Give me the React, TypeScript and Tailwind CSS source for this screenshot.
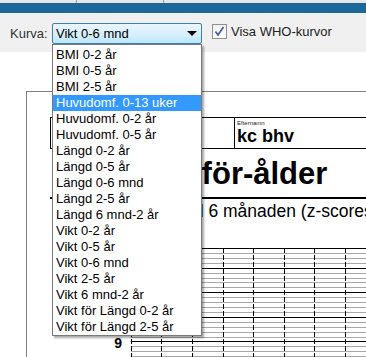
import React from 'react';

const curves = [
  'BMI 0-2 år',
  'BMI 0-5 år',
  'BMI 2-5 år',
  'Huvudomf. 0-13 uker',
  'Huvudomf. 0-2 år',
  'Huvudomf. 0-5 år',
  'Längd 0-2 år',
  'Längd 0-5 år',
  'Längd 0-6 mnd',
  'Längd 2-5 år',
  'Längd 6 mnd-2 år',
  'Vikt 0-2 år',
  'Vikt 0-5 år',
  'Vikt 0-6 mnd',
  'Vikt 2-5 år',
  'Vikt 6 mnd-2 år',
  'Vikt för Längd 0-2 år',
  'Vikt för Längd 2-5 år',
];

const ChartGrid = () => {
  const rows = Array.from({ length: 23 }, (_, i) => i * 4.92);
  const cols = Array.from({ length: 8 }, (_, k) => 30.7 + k * 30.6);
  return (
    <svg width="266" height="110" className="block">
      {rows.map((y, i) => {
        const major = i === 0 || (i - 4) % 5 === 0;
        return (
          <line
            key={'h' + i}
            x1={30.7}
            x2={266}
            y1={Math.round(y) + 0.5}
            y2={Math.round(y) + 0.5}
            stroke={major ? '#000' : '#a8a8a8'}
            strokeWidth={1}
          />
        );
      })}
      {cols.map((x, k) => (
        <line
          key={'v' + k}
          x1={Math.round(x) + 0.5}
          x2={Math.round(x) + 0.5}
          y1={0}
          y2={110}
          stroke="#000"
          strokeWidth={1}
          strokeDasharray="5 2"
        />
      ))}
      <text x={22} y={99.5} textAnchor="end" fontSize="14" fontWeight="bold" fontFamily="Liberation Sans, Arial, sans-serif">
        9
      </text>
    </svg>
  );
};

const App = () => {
  const selected = 'Vikt 0-6 mnd';
  const highlighted = 'Huvudomf. 0-13 uker';

  return (
    <div className="relative w-[366px] h-[357px] overflow-hidden bg-white font-['Liberation_Sans',Arial,sans-serif] text-[13px]">
      {/* tab strip */}
      <div className="flex h-[3px] bg-[#e6e6e6]">
        <div className="w-[77px] border-r border-[#9a9a9a]" />
        <div className="w-[87px] border-r border-[#9a9a9a]" />
      </div>
      <div className="h-[10px] bg-[#1c6898]" />

      {/* toolbar */}
      <div className="flex items-start h-[39px] bg-[#f0f0f0] pt-[10px] pl-[10px]">
        <span className="w-[42px] leading-[21px] text-[#333]">Kurva:</span>
        <div className="flex items-center justify-between w-[150px] h-[21px] border border-[#3c7fb1] rounded-[2px] bg-gradient-to-b from-[#eaf6fd] via-[#d9f0fc] to-[#bee6fd] pl-[3px] pr-[4px] text-black">
          <span className="leading-[19px]">{selected}</span>
          <svg width="10" height="5" viewBox="0 0 10 5">
            <polygon points="0,0 10,0 5,5" fill="#000" />
          </svg>
        </div>
        <div className="ml-[10px] mt-[1px] flex items-center justify-center w-[15px] h-[15px] border border-[#8e8f8f] bg-gradient-to-b from-[#f0f0f0] to-[#ffffff]">
          <svg width="11" height="11" viewBox="0 0 11 11">
            <path d="M1.5 5.5 L4 9 L9.5 1" fill="none" stroke="#4a5f97" strokeWidth="1.8" />
          </svg>
        </div>
        <span className="ml-[4px] leading-[17px] text-[#222]">Visa WHO-kurvor</span>
      </div>

      {/* document */}
      <div className="ml-[26px] mt-[39px] border-l border-t border-[#7f7f7f] h-[270px]">
        <div className="ml-[23px] mt-[25px] flex h-[32px] w-[400px] border border-black">
          <div className="w-[184px] border-r border-black" />
          <div className="pl-[2px]">
            <div className="mt-[1px] text-[6px] leading-[8px] text-[#222]">Efternamn</div>
            <div className="text-[18px] leading-[18px] font-bold text-black">kc bhv</div>
          </div>
        </div>
        <div className="mt-[7px] pl-[108px] text-[31px] leading-[36px] font-bold text-black whitespace-nowrap">
          Vikt-för-ålder
        </div>
        <div className="ml-[23px] mt-[5px] h-[2px] bg-black" />
        <div className="mt-[2px] pl-[160px] text-[17.5px] leading-[20px] text-black whitespace-nowrap">
          till 6 månaden (z-scores)
        </div>
        <div className="mt-[27px] ml-[73px]">
          <ChartGrid />
        </div>
      </div>

      {/* open dropdown list */}
      <div className="absolute left-[52px] top-[44px] w-[150px] bg-white border border-[#7a7a7a] pt-[2px] shadow-[2px_2px_2px_rgba(0,0,0,0.35)]">
        {curves.map((c) => (
          <div
            key={c}
            className={
              c === highlighted
                ? 'h-[16px] leading-[16px] pl-[3px] bg-[#3399ff] text-white whitespace-nowrap'
                : 'h-[16px] leading-[16px] pl-[3px] text-black whitespace-nowrap'
            }
          >
            {c}
          </div>
        ))}
      </div>
    </div>
  );
};

export default App;
